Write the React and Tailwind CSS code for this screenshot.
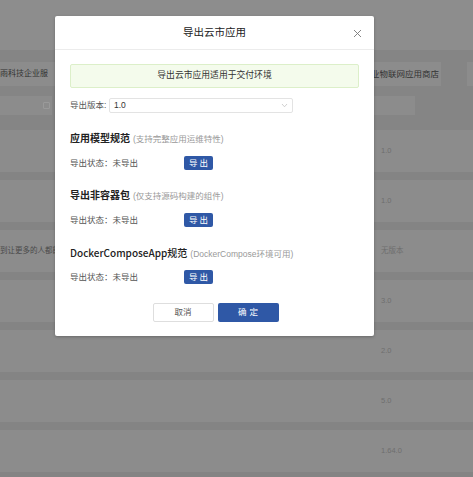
import React from 'react';

const font = { fontFamily: '"Liberation Sans", "Noto Sans CJK SC", sans-serif' };

const rows = [
  { left: '', right: '1.0' },
  { left: '', right: '1.0' },
  { left: '到让更多的人都能', right: '无版本' },
  { left: '', right: '3.0' },
  { left: '', right: '2.0' },
  { left: '', right: '5.0' },
  { left: '', right: '1.64.0' },
];

function Section({ title, note, medium }) {
  return (
    <div>
      <div className="flex items-baseline h-[14px] leading-[14px]">
        <span
          className={medium ? 'text-[10px] font-medium text-[#222] font-["Noto_Sans_CJK_SC"]' : 'text-[10px] font-bold text-[#222]'}
        >
          {title}
        </span>
        <span className="ml-[3px] text-[8.5px] text-[#999]">{note}</span>
      </div>
      <div className="mt-[10px] flex items-center h-[14px]">
        <span className="w-[114px] text-[8.5px] text-[#555]">导出状态：未导出</span>
        <button className="w-[29px] h-[14px] rounded-[2px] bg-[#2f58a6] text-white text-[8.5px] tracking-[2px] pl-[2px] leading-[14px]">
          导出
        </button>
      </div>
    </div>
  );
}

export default function App() {
  return (
    <div className="relative w-[473px] h-[477px] overflow-hidden bg-[#8b8b8b]" style={font}>
      {/* page behind the mask */}
      <div className="h-[50px] bg-[#8d8d8d]" />
      <div className="h-[80px] bg-[#858585] pt-[12px]">
        <div className="flex h-[24px] items-center">
          <div className="w-[56px] h-full bg-[#8c8c8c] flex items-center text-[8px] text-[#333] whitespace-nowrap">
            雨科技企业服
          </div>
          <div className="ml-auto w-[72px] h-full bg-[#8c8c8c] flex items-center pl-[2px] text-[8.5px] text-[#333] whitespace-nowrap overflow-hidden">
            业物联网应用商店
          </div>
          <div className="ml-[26px] w-[6px] h-full bg-[#8c8c8c]" />
        </div>
        <div className="mt-[10px] flex h-[19px]">
          <div className="w-[52px] h-full bg-[#8c8c8c] flex items-center justify-end pr-[2px]">
            <div className="w-[7px] h-[7px] border border-[#9a9a9a] rounded-[1px]" />
          </div>
          <div className="ml-auto mr-[58px] w-[45px] h-full bg-[#8c8c8c]" />
        </div>
      </div>
      <div className="flex flex-col">
        {rows.map((r, i) => (
          <div key={i} className="h-[50px] flex flex-col">
            <div className="h-[42px] bg-[#8c8c8c] flex items-center">
              <span className="w-[375px] text-[7.5px] text-[#4a4a4a] whitespace-nowrap overflow-hidden">{r.left}</span>
              <span className="pl-[6px] text-[7.5px] text-[#6e6e6e]">{r.right}</span>
            </div>
            <div className="h-[8px] bg-[#848484]" />
          </div>
        ))}
      </div>

      {/* modal */}
      <div className="absolute left-[55px] top-[16px] w-[319px] bg-white rounded-[2px] shadow-[0_1px_3px_rgba(0,0,0,0.25)]">
        <div className="relative h-[34px] flex items-center justify-center border-b border-[#ececec]">
          <span className="text-[10.5px] text-[#222]">导出云市应用</span>
          <svg className="absolute right-[12px] top-[13px]" width="9" height="9" viewBox="0 0 9 9">
            <path d="M1 1L8 8M8 1L1 8" stroke="#777" strokeWidth="0.9" fill="none" />
          </svg>
        </div>
        <div className="px-[15px] pt-[14px] pb-[14px]">
          <div className="h-[24px] rounded-[2px] border border-[#dcefc9] bg-[#f4fbec] flex items-center justify-center text-[8.8px] text-[#333]">
            导出云市应用适用于交付环境
          </div>
          <div className="mt-[10px] flex items-center h-[15px]">
            <span className="text-[8.5px] text-[#555] w-[39px]">导出版本:</span>
            <div className="w-[184px] h-[15px] border border-[#e3e3e3] rounded-[2px] flex items-center px-[4px]">
              <span className="text-[8.5px] text-[#333]">1.0</span>
              <svg className="ml-auto" width="7" height="5" viewBox="0 0 7 5">
                <path d="M1 1L3.5 3.8L6 1" stroke="#c4c4c4" strokeWidth="0.8" fill="none" />
              </svg>
            </div>
          </div>
          <div className="mt-[19px] flex flex-col gap-[19px]">
            <Section title="应用模型规范" note="(支持完整应用运维特性)" />
            <Section title="导出非容器包" note="(仅支持源码构建的组件)" />
            <Section title="DockerComposeApp规范" note="(DockerCompose环境可用)" medium />
          </div>
          <div className="mt-[19px] flex justify-center gap-[4px] pl-[2px]">
            <button className="w-[61px] h-[19px] border border-[#dedede] rounded-[2px] bg-white text-[8.5px] text-[#555]">
              取消
            </button>
            <button className="w-[61px] h-[19px] rounded-[2px] bg-[#2f58a6] text-white text-[8.5px] tracking-[3px] pl-[3px]">
              确定
            </button>
          </div>
        </div>
      </div>
    </div>
  );
}
